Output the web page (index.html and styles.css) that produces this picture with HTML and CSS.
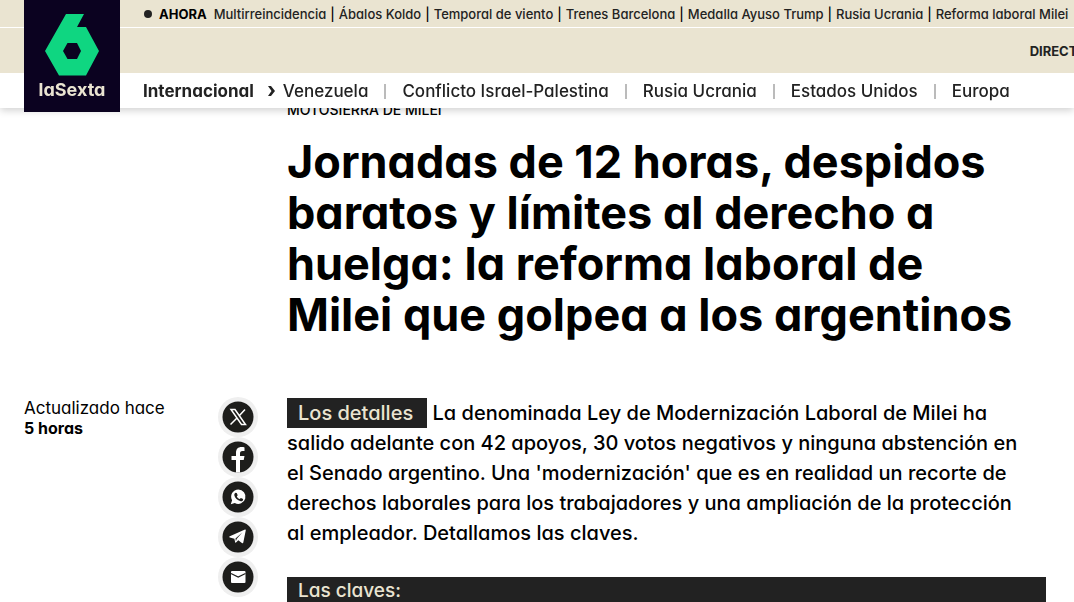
FILE: index.html
```
<!DOCTYPE html>
<html lang="es">
<head>
    <meta charset="UTF-8">
    <meta name="viewport" content="width=device-width, initial-scale=1">
    <title>laSexta - Internacional</title>
    <link rel="stylesheet" href="styles.css">
</head>
<body>
<header class="header">
    <a class="logo" href="#">
        <svg class="logo-six" viewBox="0 0 54 62" aria-hidden="true">
            <path fill="#0fd681" fill-rule="evenodd" d="M21 0H39L32 13H41L54 37L41 61.500H14L0 37ZM22.500 29L18 37L22.500 45H32L36 37L32 29Z"/>
        </svg>
        <span class="logo-name">laSexta</span>
    </a>
    <nav class="topics" aria-label="Ahora">
        <span class="dot"></span>
        <strong class="topics-title">AHORA</strong>
        <a href="#">Multirreincidencia</a>
        <a href="#">Ábalos Koldo</a>
        <a href="#">Temporal de viento</a>
        <a href="#">Trenes Barcelona</a>
        <a href="#">Medalla Ayuso Trump</a>
        <a href="#">Rusia Ucrania</a>
        <a href="#">Reforma laboral Milei</a>
    </nav>
    <div class="main-bar">
        <a class="live" href="#">DIRECTO</a>
    </div>
    <nav class="sections" aria-label="Secciones">
        <a class="current" href="#">Internacional</a>
        <svg class="chevron" viewBox="0 0 7 10" aria-hidden="true"><path d="M0 0h3l4 5-4 5H0l3.500-5z" fill="#222"/></svg>
        <a href="#">Venezuela</a>
        <a href="#">Conflicto Israel-Palestina</a>
        <a href="#">Rusia Ucrania</a>
        <a href="#">Estados Unidos</a>
        <a href="#">Europa</a>
    </nav>
</header>

<main class="article">
    <div class="heading">
        <p class="kicker">MOTOSIERRA DE MILEI</p>
        <h1>Jornadas de 12 horas, despidos baratos y límites al derecho a huelga: la reforma laboral de Milei que golpea a los argentinos</h1>
    </div>
    <div class="content">
        <p class="updated">Actualizado hace <strong>5 horas</strong></p>
        <div class="share">
            <a href="#" aria-label="X">
                <svg viewBox="0 0 32 32"><circle cx="16" cy="16" r="15.500"/><path fill="none" stroke="#fff" stroke-width="1.500" d="M9 8.500h4l10.500 15h-4zM23 8.500l-6 6.500M14.500 17.500l-6 6"/></svg>
            </a>
            <a href="#" aria-label="Facebook">
                <svg viewBox="0 0 32 32"><circle cx="16" cy="16" r="15.500"/><path fill="#fff" d="M14 31.500V19h-4.500v-4H14v-3c0-4 2-6 5.500-6 1.200 0 2.500.2 3 .4v3.600h-2c-2 0-2.500 1-2.500 2.500V15h4.500l-.8 4H18v12.500z"/></svg>
            </a>
            <a href="#" aria-label="WhatsApp">
                <svg viewBox="0 0 32 32"><circle cx="16" cy="16" r="15.500"/><path fill="#fff" d="M16.300 8.500a7.200 7.200 0 1 1-3.500 13.500L8.800 23.300l1.300-4A7.200 7.200 0 0 1 16.300 8.500z"/><path fill="#1d1d1b" d="M13.500 11.800l1.200.1 1 2.300-.9 1.200c.7 1.300 1.600 2.100 2.900 2.700l1.200-1.200 2.200 1c.3 1.700-1.200 2.500-2.400 2.300-3.300-.7-5.800-3.100-6.400-5.900-.1-1 .4-2 1.200-2.500z"/></svg>
            </a>
            <a href="#" aria-label="Telegram">
                <svg viewBox="0 0 32 32"><circle cx="16" cy="16" r="15.500"/><path fill="#fff" d="M23 8.500c.6-.2.900.1.800.7l-2.500 12.300c-.2.800-.7 1-1.400.5l-3.600-2.700-2.300 2.200c-.5.400-.8.300-.9-.4l-.7-3.300-4.600-1.400c-.7-.2-.7-.8 0-1.100zM20.500 11.200l-7 6.200.4 2.800.9-2.400z"/></svg>
            </a>
            <a href="#" aria-label="Correo electrónico">
                <svg viewBox="0 0 32 32"><circle cx="16" cy="16" r="15.500"/><rect x="9" y="10" width="14.500" height="12" rx="1" fill="#fff"/><path fill="none" stroke="#1d1d1b" stroke-width="1.200" d="M9 12.500l7.200 3.500 7.300-3.500"/></svg>
            </a>
        </div>
        <div class="text">
            <p class="lead"><span class="label">Los detalles</span> La denominada Ley de Modernización Laboral de Milei ha salido adelante con 42 apoyos, 30 votos negativos y ninguna abstención en el Senado argentino. Una 'modernización' que es en realidad un recorte de derechos laborales para los trabajadores y una ampliación de la protección al empleador. Detallamos las claves.</p>
            <h2 class="keys">Las claves:</h2>
        </div>
    </div>
</main>
</body>
</html>
```
FILE: styles.css
```
* {
    box-sizing: border-box;
}
body {
    margin: 0;
    height: 100vh;
    overflow: hidden;
    background-color: #fff;
    color: #000;
    font-family: Inter, "Liberation Sans", sans-serif;
    font-feature-settings: "cv11";
}
a {
    color: inherit;
    text-decoration: none;
}
.header {
    position: fixed;
    top: 0;
    left: 0;
    width: 100%;
    color: #222;
    background-color: #fff;
    box-shadow: 0 2px 8px rgba(0, 0, 0, 0.2);
    white-space: nowrap;
}
.logo {
    position: absolute;
    top: 0;
    left: 24px;
    width: 96px;
    height: 112px;
    padding-top: 14px;
    background-color: #0b0220;
    text-align: center;
}
.logo-six {
    display: block;
    width: 54px;
    height: 62px;
    margin: 0 auto;
}
.logo-name {
    display: block;
    color: #eae4d1;
    font-size: 18px;
    font-weight: 700;
    line-height: 28px;
}
.topics {
    display: flex;
    align-items: center;
    height: 28px;
    padding-left: 144px;
    overflow: hidden;
    background-color: #eae4d1;
    border-bottom: 1px solid #fff;
    font-size: 13px;
    font-weight: 500;
}
.dot {
    flex: none;
    width: 8px;
    height: 8px;
    margin-right: 7px;
    border-radius: 50%;
    background-color: #222;
}
.topics-title {
    margin-right: 7px;
    color: #000;
}
.topics a + a::before {
    content: "|";
    margin: 0 4px;
    color: #000;
}
.main-bar {
    display: flex;
    align-items: center;
    justify-content: flex-end;
    height: 45px;
    overflow: hidden;
    background-color: #eae4d1;
}
.live {
    margin-right: -13px;
    font-size: 13px;
    font-weight: 700;
}
.sections {
    display: flex;
    align-items: center;
    height: 35px;
    padding-left: 143px;
    font-size: 17px;
    font-weight: 500;
}
.current {
    font-weight: 700;
}
.chevron {
    width: 7px;
    height: 10px;
    margin: 0 8px 0 14px;
}
.sections a + a::before {
    content: "";
    display: inline-block;
    width: 2px;
    height: 15px;
    margin: 0 16px;
    vertical-align: -2px;
    background-color: #bbb;
}
.article {
    padding: 100px 28px 0 24px;
}
.heading {
    padding: 0 16px 0 263px;
}
.kicker {
    margin: 0;
    font-size: 14px;
    font-weight: 500;
    line-height: 20px;
}
h1 {
    margin: 16px 0 0;
    font-size: 45px;
    font-weight: 700;
    line-height: 51px;
}
.content {
    display: grid;
    grid-template-columns: 195px 68px 1fr;
    padding-top: 58px;
}
.updated {
    margin: 0;
    font-size: 17px;
    line-height: 20px;
}
.updated strong {
    display: block;
    font-size: 16px;
}
.share {
    display: flex;
    flex-direction: column;
    gap: 2px;
}
.share a {
    width: 38px;
    height: 38px;
    padding: 3px;
    border-radius: 50%;
    background-color: #efefef;
    box-shadow: 0 0 0 1px #efefef;
}
.share svg {
    display: block;
    fill: #1d1d1b;
}
.lead {
    margin: 0;
    padding-right: 16px;
    font-size: 20px;
    font-weight: 500;
    line-height: 30px;
}
.label {
    display: inline-block;
    padding: 0 14px 0 11px;
    background-color: #222;
    color: #eae4d1;
}
.keys {
    margin: 29px 0 0;
    padding: 0 11px;
    background-color: #222;
    color: #eae4d1;
    font-size: 19px;
    font-weight: 500;
    line-height: 28px;
}
```
